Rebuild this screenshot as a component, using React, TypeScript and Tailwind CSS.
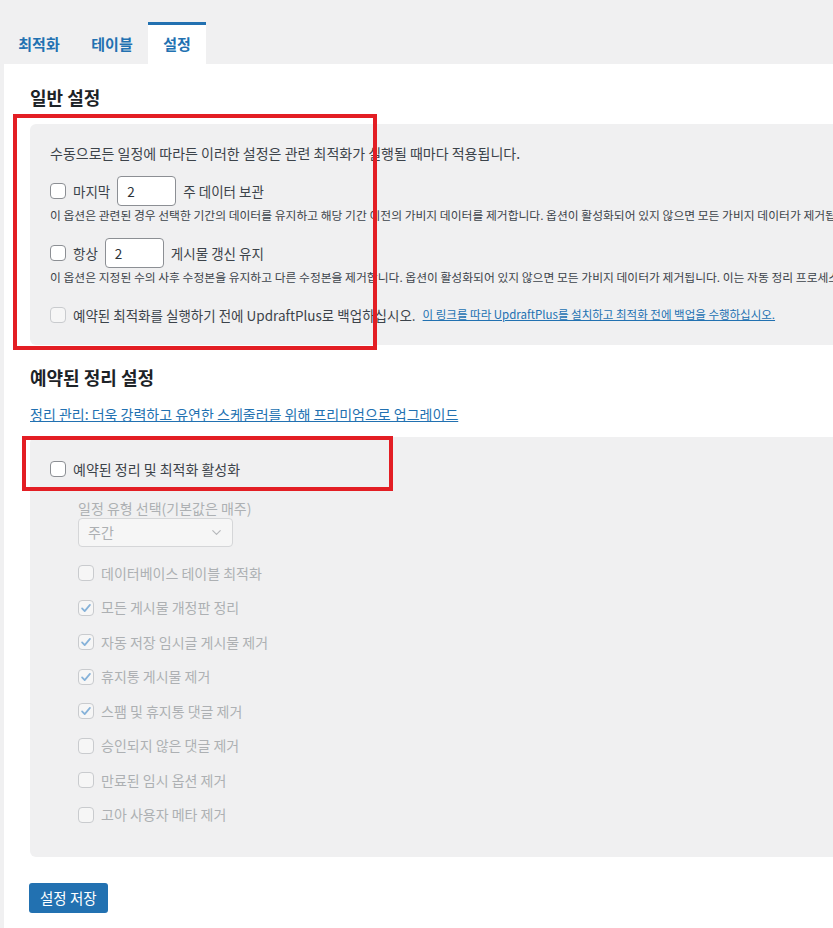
import { ChevronDown } from "lucide-react";

const FONT = { fontFamily: '"Noto Sans CJK KR", "Noto Sans", sans-serif' };

function Box({ checked = false, faded = false }: { checked?: boolean; faded?: boolean }) {
  return (
    <span
      className={`inline-flex h-4 w-4 shrink-0 items-center justify-center rounded-[4px] border ${
        faded ? "border-[#c9cbce] bg-white/40" : "border-[#8c8f94] bg-white"
      }`}
    >
      {checked && (
        <svg viewBox="0 0 16 16" className="h-3.5 w-3.5">
          <path d="M3.5 8.5l3 3 6-7" fill="none" stroke="#86b2d9" strokeWidth="2" strokeLinecap="round" strokeLinejoin="round" />
        </svg>
      )}
    </span>
  );
}

const cleanupItems = [
  { label: "데이터베이스 테이블 최적화", checked: false },
  { label: "모든 게시물 개정판 정리", checked: true },
  { label: "자동 저장 임시글 게시물 제거", checked: true },
  { label: "휴지통 게시물 제거", checked: true },
  { label: "스팸 및 휴지통 댓글 제거", checked: true },
  { label: "승인되지 않은 댓글 제거", checked: false },
  { label: "만료된 임시 옵션 제거", checked: false },
  { label: "고아 사용자 메타 제거", checked: false },
];

export default function App() {
  return (
    <div className="relative h-[928px] w-[833px] overflow-hidden bg-[#f0f0f1] text-[#3c434a]" style={FONT}>
      {/* Tabs */}
      <div className="ml-[2px] mt-[22px] flex h-[42px] items-end text-[15px] font-semibold text-[#2271b1]">
        <div className="flex h-[42px] w-[74px] items-center justify-center pt-[3px]">최적화</div>
        <div className="flex h-[42px] w-[72px] items-center justify-center pt-[3px]">테이블</div>
        <div className="flex h-[42px] w-[58px] items-center justify-center border-t-[3px] border-[#2271b1] bg-white">설정</div>
      </div>

      {/* Panel */}
      <div className="ml-1 h-[900px] bg-white pl-[26px]">
        <h2 className="flex h-[60px] items-center pt-[6px] text-[18px] font-bold text-[#1d2327]">일반 설정</h2>

        <div className="w-[1000px] rounded-l-md bg-[#f0f0f1] pl-5 pt-[19px] pb-[22px]">
          <p className="text-[14px] leading-[20px]">
            수동으로든 일정에 따라든 이러한 설정은 관련 최적화가 실행될 때마다 적용됩니다.
          </p>

          <div className="mt-[13px] flex h-[30px] items-center gap-[7px] text-[13.5px]">
            <Box />
            <span>마지막</span>
            <span className="flex h-[30px] w-[59px] items-center rounded-[4px] border border-[#8c8f94] bg-white px-[9px] text-[13.5px] text-[#2c3338]">2</span>
            <span>주 데이터 보관</span>
          </div>
          <p className="mt-[1px] whitespace-nowrap text-[11.8px] leading-[16px]">
            이 옵션은 관련된 경우 선택한 기간의 데이터를 유지하고 해당 기간 이전의 가비지 데이터를 제거합니다. 옵션이 활성화되어 있지 않으면 모든 가비지 데이터가 제거됩니다.
          </p>

          <div className="mt-[15px] flex h-[30px] items-center gap-[7px] text-[13.5px]">
            <Box />
            <span>항상</span>
            <span className="flex h-[30px] w-[59px] items-center rounded-[4px] border border-[#8c8f94] bg-white px-[9px] text-[13.5px] text-[#2c3338]">2</span>
            <span>게시물 갱신 유지</span>
          </div>
          <p className="mt-[1px] whitespace-nowrap text-[11.8px] leading-[16px]">
            이 옵션은 지정된 수의 사후 수정본을 유지하고 다른 수정본을 제거합니다. 옵션이 활성화되어 있지 않으면 모든 가비지 데이터가 제거됩니다. 이는 자동 정리 프로세스에도 적용됩니다.
          </p>

          <div className="mt-[22px] flex h-[16px] items-center gap-[7px] whitespace-nowrap text-[13.5px]">
            <Box faded />
            <span>예약된 최적화를 실행하기 전에 UpdraftPlus로 백업하십시오.</span>
            <a className="text-[11.5px] text-[#2271b1] underline">이 링크를 따라 UpdraftPlus를 설치하고 최적화 전에 백업을 수행하십시오.</a>
          </div>
        </div>

        <h2 className="flex h-[64px] items-center pt-[1px] text-[18px] font-bold text-[#1d2327]">예약된 정리 설정</h2>
        <a className="-mt-[4px] block text-[14px] leading-[18px] text-[#2271b1] underline">
          정리 관리: 더욱 강력하고 유연한 스케줄러를 위해 프리미엄으로 업그레이드
        </a>

        <div className="mt-[14px] h-[420px] w-[1000px] rounded-l-md bg-[#f0f0f1] pl-5 pt-[24px]">
          <label className="flex h-[16px] items-center gap-[7px] text-[14px] text-[#3c434a]">
            <Box />
            <span>예약된 정리 및 최적화 활성화</span>
          </label>

          <div className="pl-[28px] text-[14px] text-[#adb0b3]">
            <p className="mt-[23px] leading-[17px]">일정 유형 선택(기본값은 매주)</p>
            <div className="mt-[1px] flex h-[29px] w-[155px] items-center justify-between rounded-[4px] border border-[#d5d6d8] bg-white/40 pl-[9px] pr-[8px]">
              <span>주간</span>
              <ChevronDown size={15} strokeWidth={1.8} className="text-[#b5b7ba]" />
            </div>

            <div className="mt-[18px] flex flex-col gap-[18.5px]">
              {cleanupItems.map((item) => (
                <div key={item.label} className="flex h-[16px] items-center gap-[7px]">
                  <Box faded checked={item.checked} />
                  <span>{item.label}</span>
                </div>
              ))}
            </div>
          </div>
        </div>

        <button className="mt-[26px] -ml-px flex h-[30px] items-center rounded-[3px] bg-[#2271b1] px-[11px] text-[14.5px] text-white">
          설정 저장
        </button>
      </div>

      {/* annotation boxes */}
      <div className="absolute left-[13px] top-[114px] h-[236px] w-[364px] border-4 border-[#e31e24]" />
      <div className="absolute left-[22px] top-[436px] h-[55px] w-[371px] border-4 border-[#e31e24]" />
    </div>
  );
}
